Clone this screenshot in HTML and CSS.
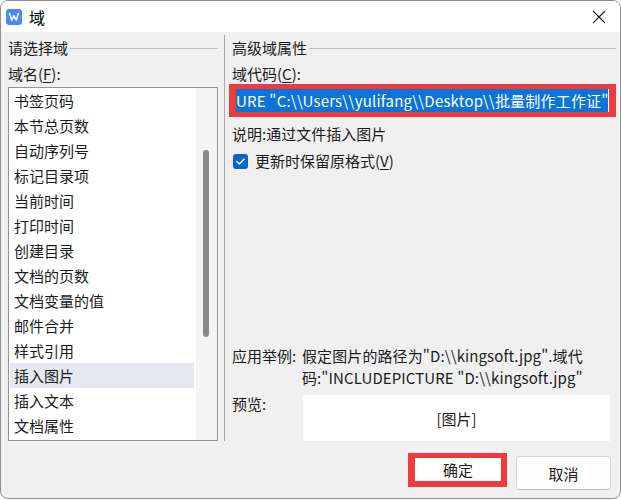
FILE: index.html
```html
<!DOCTYPE html>
<html lang="zh-CN">
<head>
<meta charset="utf-8">
<title>域</title>
<link rel="stylesheet" href="styles.css">
</head>
<body>
<div class="window">
  <div class="titlebar">
    <svg class="app-icon" width="16" height="16" viewBox="0 0 16 16">
      <rect x="0" y="0" width="16" height="16" rx="3" fill="#4a8cf3"/>
      <path d="M3.6 4.6 L5.8 11.2 L8 6.6 L10.2 11.2 L12.4 4.6" fill="none" stroke="#fff" stroke-width="1.5" stroke-linejoin="round" stroke-linecap="round"/>
    </svg>
    <span class="title">域</span>
    <svg class="close" width="14" height="14" viewBox="0 0 14 14">
      <path d="M1 1 L13 13 M13 1 L1 13" stroke="#1a1a1a" stroke-width="1.1"/>
    </svg>
  </div>
  <div class="content">
    <div class="left">
      <div class="group-title"><span>请选择域</span><i class="rule"></i></div>
      <div class="label">域名(<u>F</u>):</div>
      <div class="listbox">
        <ul class="items">
          <li>书签页码</li>
          <li>本节总页数</li>
          <li>自动序列号</li>
          <li>标记目录项</li>
          <li>当前时间</li>
          <li>打印时间</li>
          <li>创建目录</li>
          <li>文档的页数</li>
          <li>文档变量的值</li>
          <li>邮件合并</li>
          <li>样式引用</li>
          <li class="selected">插入图片</li>
          <li>插入文本</li>
          <li>文档属性</li>
        </ul>
        <div class="scrollbar"><div class="thumb"></div></div>
      </div>
    </div>
    <div class="divider"></div>
    <div class="right">
      <div class="group-title"><span>高级域属性</span><i class="rule"></i></div>
      <div class="label">域代码(<u>C</u>):</div>
      <div class="codebox"><span class="sel">URE "C:\\Users\\yulifang\\Desktop\\批量制作工作证"</span><i class="caret"></i></div>
      <div class="desc">说明:通过文件插入图片</div>
      <div class="check-row">
        <svg class="checkbox" width="15" height="15" viewBox="0 0 15 15">
          <rect x="0" y="0" width="15" height="15" rx="3" fill="#0a64c2"/>
          <path d="M3.8 7.6 L6.3 10.1 L11.2 5" fill="none" stroke="#fff" stroke-width="1.4" stroke-linecap="round" stroke-linejoin="round"/>
        </svg>
        <span>更新时保留原格式(<u>V</u>)</span>
      </div>
      <div class="example">
        <span class="ex-label">应用举例:</span>
        <span class="ex-text">假定图片的路径为"D:\\kingsoft.jpg".域代码:"INCLUDEPICTURE "D:\\kingsoft.jpg"</span>
      </div>
      <div class="preview-row">
        <span class="pv-label">预览:</span>
        <div class="preview">[图片]</div>
      </div>
    </div>
  </div>
  <div class="footer">
    <div class="btn ok">确定</div>
    <div class="btn cancel">取消</div>
  </div>
</div>
</body>
</html>
```
FILE: styles.css
```css
* { box-sizing: border-box; }
html, body { margin: 0; padding: 0; background: #ffffff; }
body {
  font-family: "Noto Sans CJK SC", "Noto Sans", sans-serif;
  font-size: 15px;
  color: #1b1b1b;
}
.window {
  width: 621px;
  height: 499px;
  border: 1px solid #8f8f8f;
  border-radius: 8px;
  overflow: hidden;
  background: #f0f0f0;
  display: flex;
  flex-direction: column;
}
.titlebar {
  height: 31px;
  background: #ffffff;
  display: flex;
  align-items: center;
  padding-left: 5px;
  padding-right: 14px;
}
.app-icon { flex: none; }
.title { margin-left: 7px; font-size: 16px; line-height: 20px; color: #000; }
.close { margin-left: auto; }
.content {
  display: flex;
  padding: 6px 9px 0 7px;
  height: 409px;
}
.left { width: 210px; flex: none; display: flex; flex-direction: column; }
.divider {
  width: 1px;
  background: #a9a9a9;
  margin: -3px 0 0 6px;
  height: 406px;
  flex: none;
}
.right { flex: 1; margin-left: 7px; display: flex; flex-direction: column; height: 403px; }
.group-title {
  height: 20px;
  line-height: 20px;
  display: flex;
  align-items: center;
}
.group-title .rule {
  flex: 1;
  height: 1px;
  background: #bdbdbd;
  margin-left: 2px;
  margin-top: 1px;
}
.label { margin-top: 6px; height: 20px; line-height: 20px; }
.label u, .check-row u { text-decoration-thickness: 1px; text-underline-offset: 2px; }
.listbox {
  margin-top: 3px;
  height: 354px;
  border: 1px solid #939393;
  background: #fff;
  display: flex;
}
.items {
  list-style: none;
  margin: 0;
  padding: 0 2px 0 1px;
  flex: 1;
}
.items li {
  height: 25px;
  line-height: 25px;
  padding-left: 4px;
}
.items li.selected { background: #e5e8ee; }
.scrollbar {
  width: 21px;
  background: #f4f4f4;
  position: relative;
  flex: none;
}
.thumb {
  position: absolute;
  left: 7px;
  top: 62px;
  width: 6px;
  height: 187px;
  border-radius: 3px;
  background: #8a8a8a;
}
.codebox {
  margin-left: -3px;
  width: 387px;
  height: 33px;
  background: #ee3b3b;
  padding: 5px 0 5px 7px;
  display: flex;
  align-items: stretch;
}
.codebox .sel {
  background: #0b74d6;
  color: #fff;
  line-height: 23px;
  white-space: nowrap;
  width: 372px;
  overflow: hidden;
  letter-spacing: 0.2px;
}
.codebox .caret { width: 1px; background: #fff; }
.desc { margin-top: 7px; height: 20px; line-height: 20px; }
.check-row {
  margin-top: 7px;
  height: 20px;
  display: flex;
  align-items: center;
  line-height: 20px;
}
.checkbox { margin-left: 1px; margin-right: 7px; flex: none; }
.example {
  margin-top: auto;
  display: flex;
  line-height: 22px;
}
.ex-label { width: 70px; flex: none; }
.ex-text { flex: 1; padding-right: 20px; letter-spacing: 0.1px; }
.preview-row {
  margin-top: 6px;
  display: flex;
  align-items: flex-start;
}
.pv-label { width: 71px; flex: none; line-height: 20px; margin-top: -1px; }
.preview {
  width: 307px;
  height: 46px;
  background: #fff;
  display: flex;
  align-items: center;
  justify-content: center;
}
.footer {
  display: flex;
  justify-content: flex-end;
  align-items: flex-start;
  padding-right: 9px;
}
.btn {
  display: flex;
  align-items: center;
  justify-content: center;
}
.ok {
  margin-top: 12px;
  width: 99px;
  height: 34px;
  border: 6px solid #ee3b3b;
  border-left-width: 7px;
  border-top-width: 5px;
  background: #fff;
}
.cancel {
  margin-top: 15px;
  margin-left: 9px;
  width: 95px;
  height: 34px;
  background: #fdfdfd;
  border: 1px solid #d5d5d5;
  border-bottom-color: #c2c2c2;
  border-radius: 4px;
}
```
